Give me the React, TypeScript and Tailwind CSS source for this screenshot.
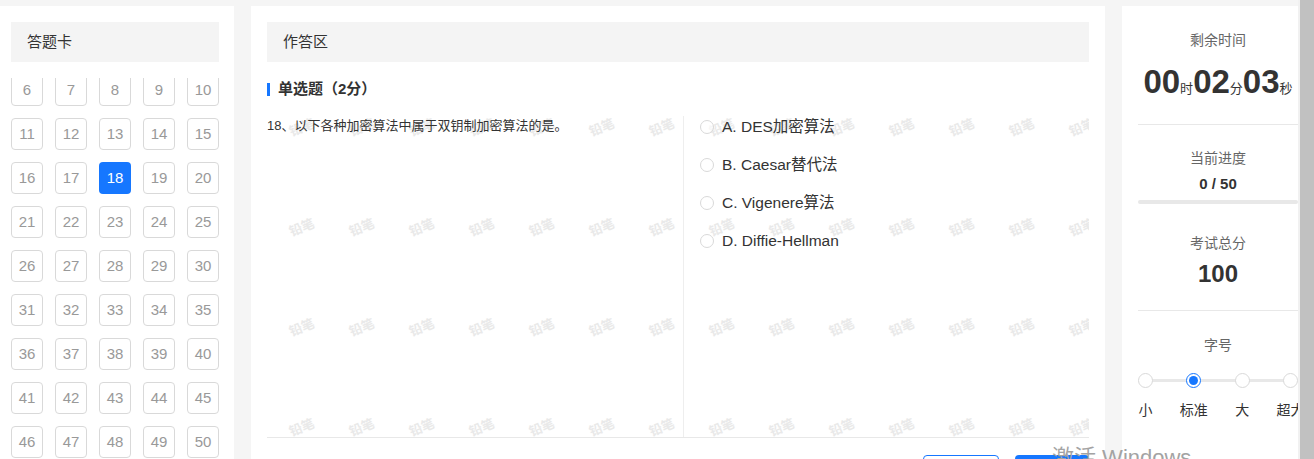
import React from 'react';

const numbers = Array.from({ length: 50 }, (_, i) => i + 1);
const options = ['A. DES加密算法', 'B. Caesar替代法', 'C. Vigenere算法', 'D. Diffie-Hellman'];
const sizes = ['小', '标准', '大', '超大'];

const Watermark = () => (
  <div className="pointer-events-none absolute inset-0 overflow-hidden">
    <div className="absolute left-[5px] top-[-38px] grid grid-cols-[repeat(14,60px)] auto-rows-[100px] place-items-center">
      {Array.from({ length: 56 }, (_, i) => (
        <span key={i} className="-rotate-[22deg] text-[13px] font-bold text-[#e9e9e9] select-none">
          铅笔
        </span>
      ))}
    </div>
  </div>
);

const AnswerCard = () => (
  <div className="flex w-[234px] shrink-0 flex-col bg-white pl-[11px] pr-[15px] pt-4">
    <div className="flex h-[40px] shrink-0 items-center bg-[#f4f4f4] pl-4 text-[15px] text-[#333]">答题卡</div>
    <div className="mt-4 min-h-0 flex-1 overflow-hidden">
      <div className="mt-[-48px] grid grid-cols-[repeat(5,32px)] gap-[12px]">
        {numbers.map((n) => (
          <div
            key={n}
            className={
              n === 18
                ? 'flex h-[32px] items-center justify-center rounded-[4px] bg-[#1677ff] text-[15px] text-white'
                : 'flex h-[32px] items-center justify-center rounded-[4px] border border-[#d9d9d9] text-[15px] text-[#999]'
            }
          >
            {n}
          </div>
        ))}
      </div>
    </div>
  </div>
);

const AnswerArea = () => (
  <div className="flex w-[854px] shrink-0 flex-col bg-white px-4 pt-4">
    <div className="flex h-[40px] shrink-0 items-center bg-[#f4f4f4] pl-4 text-[15px] text-[#333]">作答区</div>
    <div className="mt-4 flex h-[22px] shrink-0 items-center">
      <span className="mr-[8px] h-[13px] w-[3px] bg-[#1677ff]" />
      <span className="text-[15px] font-bold text-[#333]">单选题（2分）</span>
    </div>
    <div className="relative mt-4 flex h-[322px] shrink-0 border-b border-[#e8e8e8]">
      <Watermark />
      <div className="relative w-[416px] shrink-0 text-[13px] leading-[20px] text-[#333]">
        18、以下各种加密算法中属于双钥制加密算法的是。
      </div>
      <div className="relative flex flex-1 flex-col gap-[16px] border-l border-[#eeeeee] pl-4">
        {options.map((o) => (
          <label key={o} className="flex h-[22px] items-center text-[15.5px] text-[#333]">
            <span className="mr-[8px] h-[14px] w-[14px] rounded-full border border-[#d9d9d9] bg-white/60" />
            {o}
          </label>
        ))}
      </div>
    </div>
    <div className="mt-[17px] flex shrink-0 justify-end gap-[16px]">
      <button className="h-[32px] w-[76px] rounded-[4px] border border-[#1677ff] text-[14px] text-[#1677ff]">上一题</button>
      <button className="h-[32px] w-[74px] rounded-[4px] bg-[#1677ff] text-[14px] text-white">下一题</button>
    </div>
  </div>
);

const InfoPanel = () => (
  <div className="w-[192px] shrink-0 bg-white px-4 text-center">
    <div className="border-b border-[#e8e8e8] pb-[22px]">
      <div className="pt-[24px] text-[14px] leading-[20px] text-[#666]">剩余时间</div>
      <div className="mt-[12px] flex h-[40px] items-baseline justify-center font-bold text-[#333]">
        <span className="text-[33px] leading-[40px]">00</span>
        <span className="text-[13px] font-normal">时</span>
        <span className="text-[33px] leading-[40px]">02</span>
        <span className="text-[13px] font-normal">分</span>
        <span className="text-[33px] leading-[40px]">03</span>
        <span className="text-[13px] font-normal">秒</span>
      </div>
    </div>
    <div className="pt-[23px] text-[14px] leading-[20px] text-[#666]">当前进度</div>
    <div className="mt-[6px] text-[15px] font-bold leading-[20px] text-[#333]">0 / 50</div>
    <div className="mt-[6px] h-[4px] rounded-full bg-[#e8e8e8]" />
    <div className="border-b border-[#e8e8e8] pb-[21px]">
      <div className="mt-[29px] text-[14px] leading-[20px] text-[#666]">考试总分</div>
      <div className="mt-[6px] text-[24px] font-bold leading-[30px] text-[#333]">100</div>
    </div>
    <div className="pt-[24px] text-[14px] leading-[20px] text-[#666]">字号</div>
    <div className="relative mt-[18px] flex justify-between">
      <div className="absolute left-[7px] right-[7px] top-[6px] h-[3px] bg-[#e8e8e8]" />
      {sizes.map((s, i) => (
        <div key={s} className="relative flex w-[15px] flex-col items-center">
          {i === 1 ? (
            <span className="flex h-[15px] w-[15px] items-center justify-center rounded-full border-[1.5px] border-[#1677ff] bg-white">
              <span className="h-[9px] w-[9px] rounded-full bg-[#1677ff]" />
            </span>
          ) : (
            <span className="h-[15px] w-[15px] rounded-full border border-[#d9d9d9] bg-white" />
          )}
          <span className="mt-[12px] whitespace-nowrap text-[14px] leading-[20px] text-[#333]">{s}</span>
        </div>
      ))}
    </div>
  </div>
);

export default function App() {
  return (
    <div className="relative flex h-[459px] w-full overflow-hidden bg-[#f5f5f5] font-['Liberation_Sans','Noto_Sans_CJK_SC',sans-serif]">
      <div className="flex flex-1 gap-[17px] overflow-hidden pt-[6px]">
        <AnswerCard />
        <AnswerArea />
        <InfoPanel />
      </div>
      <div className="w-[16px] shrink-0 border-l-[2px] border-[#f1f1f1] bg-[#c1c1c1]" />
      <div className="pointer-events-none absolute left-[1052px] top-[441px] whitespace-nowrap text-[22px] text-[#a3a3a3]">
        激活 Windows
      </div>
    </div>
  );
}
